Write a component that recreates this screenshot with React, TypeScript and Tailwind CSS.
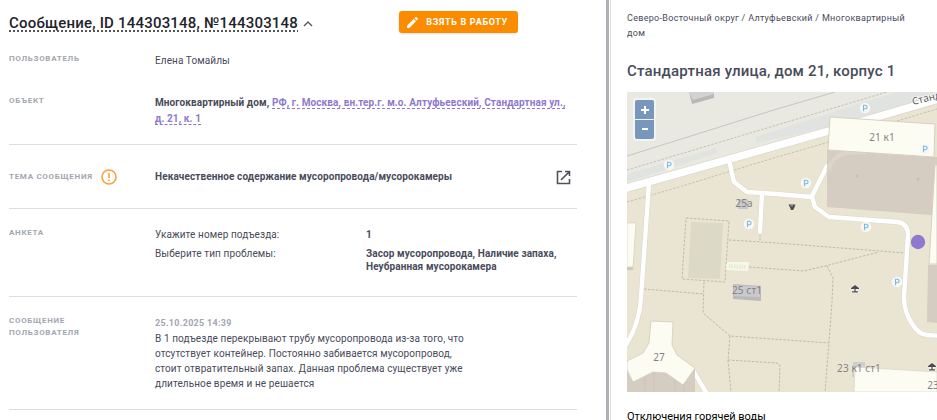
import type { ReactNode } from 'react';

function Label({ children }: { children: ReactNode }) {
  return (
    <h2 className="w-[146px] shrink-0 text-[8px] leading-3 font-bold tracking-[0.7px] text-[#a3a6af] uppercase">
      {children}
    </h2>
  );
}

const parkings = [
  [42, 73],
  [238, 16],
  [298, 57],
  [179, 91],
  [122, 132],
  [239, 135],
  [270, 190],
];

function Picnic({ x, y }: { x: number; y: number }) {
  return (
    <path
      transform={`translate(${x} ${y})`}
      d="M0-4 4-1V0H.6V2.2H3V3.6H-3V2.2H-.6V0H-4V-1Z"
      fill="#4b4b52"
      stroke="#fffdf2"
      strokeWidth="1"
      paintOrder="stroke"
    />
  );
}

function CityMap() {
  return (
    <svg viewBox="0 0 310 300" preserveAspectRatio="xMinYMin slice" className="block h-[300px] w-full" role="img" aria-label="Карта">
      <rect width="310" height="300" fill="#eae5d2" />
      <path d="M0 0H310V4L202 37 0 95Z" fill="#e9e9e2" />
      <path d="M0 82 89 56 90 61 0 90ZM128 45 270 0H310V4L202 35 130 51Z" fill="#e0e3df" />
      <path d="M62 0 65 12 87 6V0Z" fill="#b9b8b8" />
      <path d="M62 0 66 8 87 2V0Z" fill="#d3d2d2" />
      <path d="M0 64 150 17 208 0" fill="none" stroke="#c6c5c3" />
      <path
        d="M0 78 150 33 260 0M0 110 42 98 150 65 202 50M270 29 310 17"
        fill="none"
        stroke="#c0bbae"
        strokeDasharray="2.5 1.5"
        strokeWidth=".9"
      />
      <path
        d="M102 148 150 151 278 161M133 142V150M122 175 150 177 177 179 202 173 252 160M200 174 206 186 205 210 202 250 198 300M17 197 77 202M77 190 76 221 103 244 202 251M103 244 101 268 104 300M101 268 150 271 153 273 152 300M59 126 102 129 98 190 55 187Z"
        fill="none"
        stroke="#b9b4a2"
        strokeDasharray="2.5 1.5"
        strokeWidth=".9"
      />
      <g fill="none" strokeLinecap="round" strokeLinejoin="round">
        <g stroke="#dcd8cb">
          <path d="M-5 98 0 96 202 39 315 6" strokeWidth="9" />
          <path d="M22 91 14 205Q13 232-3 256M102 68 107 90 120 100 150 102 185 105 188 115 202 125 270 130Q281 131 281 143L277 205C277 225 290 243 300 243L315 244M185 104 200 74M135 101 133 140M67 280 80 302" strokeWidth="5.5" />
        </g>
        <g stroke="#fff">
          <path d="M-5 98 0 96 202 39 315 6" strokeWidth="7.5" />
          <path d="M22 91 14 205Q13 232-3 256M102 68 107 90 120 100 150 102 185 105 188 115 202 125 270 130Q281 131 281 143L277 205C277 225 290 243 300 243L315 244M185 104 200 74M135 101 133 140M67 280 80 302" strokeWidth="4.4" />
        </g>
      </g>
      <path d="M64 130 96 131 93 187 61 186Z" fill="#dcd9c6" />
      <path d="M100 170 122 170 121 179 99 178Z" fill="#f6f8ea" />
      <path d="M102 174 119 175" stroke="#e4ead6" strokeWidth="4" strokeDasharray="1.5 1" />
      <path d="M0 131H9L6 178H0Z" fill="#d0c9ba" />
      <path d="M0 131H9L6 175H0Z" fill="#fcfcf3" stroke="#d8d2c4" strokeWidth=".7" />
      <path d="M200 58 307 65H310V124L303 123 200 115Z" fill="#d5cdc1" />
      <path d="M201 78Q205 65 218 61L240 60" fill="none" stroke="#dbd5cb" strokeWidth="4" />
      <circle cx="230" cy="84" r="1.7" fill="#c8c1b2" />
      <circle cx="291" cy="87" r="1.7" fill="#c8c1b2" />
      <path d="M203 25 308 32 307 65 201 58Z" fill="#fcfcf3" stroke="#d8d0bf" />
      <path d="M308 73H310V172H302Z" fill="#fcfcf3" stroke="#d8d0bf" />
      <path d="M301 173H310V231L300 230Z" fill="#d5cdc1" />
      <rect x="111" y="107" width="10" height="10" fill="#c9c8c7" />
      <path d="M106 192 134 194V209L106 207Z" fill="#bab9bb" />
      <path d="M107 193 133 195V205L107 204Z" fill="#cbcacb" />
      <path d="M0 278H68V300H0Z" fill="#d5cdc1" />
      <path d="M18 281V300M27 281V300M48 287V300M57 292V300" stroke="#cac2b5" strokeWidth=".7" />
      <path d="M24 229 46 230 45 253 50 263 68 276 56 293 39 281 26 280 6 290 0 278V269L16 261 22 251Z" fill="#fcfcf3" stroke="#d4ccbc" strokeWidth=".8" />
      <path d="M226 270H238V277H227V285H225Z" fill="#cfcece" />
      <path d="M228 275 310 280V300H227Z" fill="#fcfcf3" stroke="#dcd6c7" strokeWidth=".7" />
      <g fontFamily="'Noto Sans', sans-serif" fontSize="10" fill="#838186" textAnchor="middle">
        <text x="255" y="49">21 к1</text>
        <text x="117" y="115">25а</text>
        <text x="120" y="202">25 ст1</text>
        <text x="32" y="269">27</text>
        <text x="232" y="280">23 к1 ст1</text>
        <text x="306" y="297">23</text>
        <text x="286" y="13" fill="#58575a" textAnchor="start" transform="rotate(-14 286 13)" stroke="#fff" strokeWidth="1.5" paintOrder="stroke">
          Станд
        </text>
      </g>
      {parkings.map(([x, y]) => (
        <g key={`${x}-${y}`}>
          <circle cx={x} cy={y} r="5.3" fill="#f8f7f1" />
          <path d={`M${x - 1.5} ${y + 3.2}V${y - 2.7}H${x + 0.4}A1.7 1.7 0 0 1 ${x + 0.4} ${y + 0.7}H${x - 1.5}`} fill="none" stroke="#74bdeb" strokeWidth="1.1" />
        </g>
      ))}
      <path d="M161.500 112.500H168.500L167 116.500 166 118H164L163 115.500Z" fill="#4b4b52" />
      <path d="M163.500 113.800H166" stroke="#e5e0d0" strokeWidth=".7" />
      <Picnic x={228} y={197} />
      <Picnic x={305} y={275} />
      <circle cx="291" cy="150" r="7.2" fill="#8e79cf" />
    </svg>
  );
}

export default function App() {
  return (
    <main className="flex h-screen overflow-hidden bg-white font-['Roboto',sans-serif] text-[10px] leading-4 tracking-[0.1px] text-[#484b5a]">
      <article className="min-w-0 flex-1 pr-[29px] pl-[9px]">
        <header className="flex items-center pt-[11px]">
          <h1 className="pt-0.5 text-[15px] leading-5 font-medium tracking-[0.2px] text-[#22232a]">
            <a
              href="#message"
              className="underline decoration-[#555] decoration-dotted decoration-2 underline-offset-2 [text-decoration-skip-ink:none]"
            >
              Сообщение, ID 144303148, №144303148
            </a>
          </h1>
          <button type="button" aria-label="Свернуть" className="ml-1 pt-1 text-[#555761]">
            <svg width="12" height="10" viewBox="0 0 12 10" fill="none" stroke="currentColor" strokeWidth="1.4">
              <path d="M2 7 6 3 10 7" />
            </svg>
          </button>
          <button
            type="button"
            className="mr-[59px] ml-auto flex h-[22px] items-center gap-2 rounded-[3px] bg-[#fb8c00] pr-2.5 pl-2 text-[9px] font-bold tracking-[0.7px] text-white uppercase shadow"
          >
            <svg width="11" height="11" viewBox="3 3 18 18" fill="currentColor">
              <path d="M3 17.25V21h3.75L17.8 9.94l-3.75-3.75zM20.7 7.04a1 1 0 0 0 0-1.41l-2.34-2.34a1 1 0 0 0-1.41 0l-1.83 1.83 3.75 3.75z" />
            </svg>
            Взять в работу
          </button>
        </header>

        <section className="mt-5 flex">
          <Label>Пользователь</Label>
          <p>Елена Томайлы</p>
        </section>
        <section className="mt-[26px] flex border-b border-[#dddddf] pb-[17px]">
          <Label>Объект</Label>
          <p className="font-bold">
            Многоквартирный дом,{' '}
            <a href="#object" className="border-b border-dashed border-[#8e79cf] text-[#8e79cf]">
              РФ, г. Москва, вн.тер.г. м.о. Алтуфьевский, Стандартная ул., д. 21, к. 1
            </a>
          </p>
        </section>

        <section className="flex items-center border-b border-[#dddddf] pt-6 pb-[23px]">
          <div className="flex w-[146px] shrink-0 items-center">
            <h2 className="mr-2 text-[8px] leading-3 font-bold tracking-[0.7px] whitespace-nowrap text-[#a3a6af] uppercase">
              Тема сообщения
            </h2>
            <svg width="16" height="16" viewBox="0 0 16 16" fill="none" stroke="#ff9f38" strokeWidth="1.6">
              <circle cx="8" cy="8" r="7" />
              <path d="M8 4V9M8 10.5V12" />
            </svg>
          </div>
          <p className="font-bold">Некачественное содержание мусоропровода/мусорокамеры</p>
          <a href="#topic" aria-label="Открыть тему" className="mr-1.5 ml-auto">
            <svg width="15" height="15" viewBox="0 0 15 15" fill="none" stroke="#54505b" strokeWidth="1.6">
              <path d="M6 1.5H1.5V13.5H13.5V9M9 1.5H13.5V6M13.5 1.5 5 10" />
            </svg>
          </a>
        </section>

        <section className="flex border-b border-[#dddddf] pt-[18px] pb-[23px]">
          <Label>Анкета</Label>
          <dl className="grid flex-1 grid-cols-[211px_1fr] gap-y-1">
            <dt>Укажите номер подъезда:</dt>
            <dd className="font-bold">1</dd>
            <dt className="leading-[13px]">Выберите тип проблемы:</dt>
            <dd className="leading-[13px] font-bold">
              Засор мусоропровода, Наличие запаха,
              <br />
              Неубранная мусорокамера
            </dd>
          </dl>
        </section>

        <section className="flex border-b border-[#dddddf] pt-[18px] pb-[18px]">
          <Label>
            Сообщение
            <br />
            пользователя
          </Label>
          <div>
            <time className="block text-[9px] font-bold tracking-[0.3px] text-[#a3a6af]">25.10.2025 14:39</time>
            <p className="leading-[15px]">
              В 1 подъезде перекрывают трубу мусоропровода из-за того, что
              <br />
              отсутствует контейнер. Постоянно забивается мусоропровод,
              <br />
              стоит отвратительный запах. Данная проблема существует уже
              <br />
              длительное время и не решается
            </p>
          </div>
        </section>
      </article>

      <aside className="w-1/3 max-w-[331px] min-w-[331px] border-l-[3px] border-[#b0b0b6]">
        <div className="ml-px h-full border-l border-[#dedee2] pl-4">
          <nav className="pt-[11px] pr-6 text-[9px] leading-[15px] tracking-[0.3px]">
            Северо-Восточный округ / Алтуфьевский / Многоквартирный дом
          </nav>
          <h2 className="mt-5 text-[15px] leading-5 font-medium tracking-[0.2px]">Стандартная улица, дом 21, корпус 1</h2>
          <div className="relative mt-[11px]">
            <CityMap />
            <div className="absolute top-1.5 left-1.5 flex flex-col gap-px rounded-sm bg-[#f4f4ef] p-0.5">
              <button type="button" aria-label="Приблизить" className="flex size-[19px] items-center justify-center rounded-t-xs bg-[#7897bd] text-white">
                <svg width="8" height="8" viewBox="0 0 8 8" stroke="currentColor" strokeWidth="2">
                  <path d="M0 4H8M4 0V8" />
                </svg>
              </button>
              <button type="button" aria-label="Отдалить" className="flex size-[19px] items-center justify-center rounded-b-xs bg-[#7897bd] text-white">
                <svg width="8" height="8" viewBox="0 0 8 8" stroke="currentColor" strokeWidth="2">
                  <path d="M1 3H7" />
                </svg>
              </button>
            </div>
          </div>
          <h3 className="mt-[17px] text-[11px] leading-4 font-normal tracking-normal text-black">Отключения горячей воды</h3>
        </div>
      </aside>
    </main>
  );
}
